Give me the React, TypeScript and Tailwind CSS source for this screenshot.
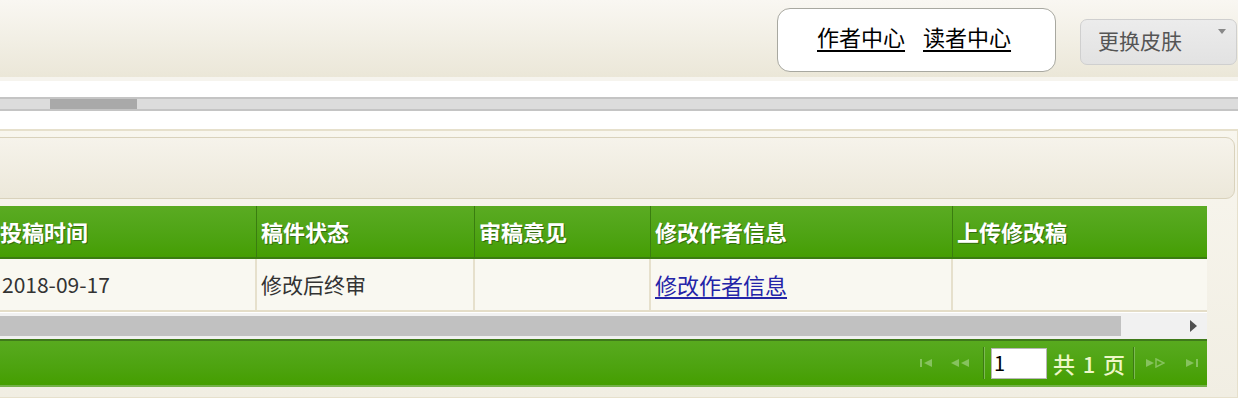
import React from "react";

const COLS = "grid-cols-[261px_218px_176px_302px_254px]";

const HEADERS = ["投稿时间", "稿件状态", "审稿意见", "修改作者信息", "上传修改稿"];

function PagerIcon({ kind }: { kind: "first" | "prev" | "next" | "last" }) {
  const fill = "#86c25e";
  if (kind === "first")
    return (
      <svg width="14" height="10" viewBox="0 0 14 10">
        <rect x="0" y="1" width="2" height="8" fill={fill} />
        <path d="M12 1 L4 5 L12 9 Z" fill={fill} />
      </svg>
    );
  if (kind === "prev")
    return (
      <svg width="20" height="10" viewBox="0 0 20 10">
        <path d="M9 1 L1 5 L9 9 Z" fill={fill} />
        <path d="M19 1 L11 5 L19 9 Z" fill={fill} />
      </svg>
    );
  if (kind === "next")
    return (
      <svg width="20" height="10" viewBox="0 0 20 10">
        <path d="M1 1 L9 5 L1 9 Z" fill={fill} />
        <path d="M11 1 L19 5 L11 9 Z" fill="none" stroke={fill} strokeWidth="1.5" />
      </svg>
    );
  return (
    <svg width="14" height="10" viewBox="0 0 14 10">
      <path d="M2 1 L10 5 L2 9 Z" fill={fill} />
      <rect x="12" y="1" width="2" height="8" fill={fill} />
    </svg>
  );
}

function Separator() {
  return (
    <div className="flex h-[32px]">
      <div className="w-px bg-[#3c7c12]" />
      <div className="w-px bg-[#7cba52]" />
    </div>
  );
}

export default function App() {
  return (
    <div className="w-[1238px] h-[408px] overflow-hidden bg-white font-['Noto_Sans_CJK_SC','Noto_Sans',sans-serif]">
      {/* top bar */}
      <div className="h-[77px] bg-gradient-to-b from-[#f9f7f2] to-[#ebe7d8] flex items-start justify-end pr-px">
        <div className="mt-[8px] w-[279px] h-[64px] pb-[8px] bg-white border border-[#a8a8a0] rounded-[13px] flex items-center pl-[39px] gap-[18px] text-[22px] leading-none text-black">
          <a href="#" className="underline underline-offset-[4px]">作者中心</a>
          <a href="#" className="underline underline-offset-[4px]">读者中心</a>
        </div>
        <div className="mt-[19px] ml-[24px] w-[157px] h-[46px] pb-[3px] rounded-[7px] border border-[#cfcfcf] bg-gradient-to-b from-[#ececec] to-[#e2e2e2] flex items-center pl-[17px] pr-[10px] text-[21px] text-[#555] leading-none">
          <span className="flex-1">更换皮肤</span>
          <span className="self-start mt-[9px] w-0 h-0 border-l-[4px] border-r-[4px] border-t-[5px] border-l-transparent border-r-transparent border-t-[#888]" />
        </div>
      </div>
      <div className="h-[4px] bg-[#f6f4ee]" />
      <div className="h-[16px] bg-white" />

      {/* page scrollbar */}
      <div className="h-[14px] bg-[#dcdcdc] border-y-2 border-[#c4c4c4] flex items-stretch">
        <div className="ml-[50px] w-[87px] bg-[#a9a9a9]" />
      </div>
      <div className="h-[18px] bg-white" />

      {/* content frame */}
      <div className="h-[269px] bg-gradient-to-b from-[#f8f6ee] to-[#f1eee3] border-t-2 border-r border-b border-[#e6e0cc] pt-[6px] pb-[9px]">
        <div className="-ml-[20px] mr-[2px] h-[62px] rounded-[9px] border border-[#d9d2bc] bg-gradient-to-b from-[#f6f3eb] to-[#ece8da]" />

        <div className="-ml-[4px] w-[1211px] mt-[7px]">
          {/* header */}
          <div className={`grid ${COLS} h-[53px] bg-gradient-to-b from-[#5aab22] to-[#459e02] border-b-2 border-[#3a7d10]`}>
            {HEADERS.map((h, i) => (
              <div
                key={h}
                className={`flex items-center pl-[4px] text-[22px] font-bold text-white [text-shadow:1px_1px_0_#356e10] ${
                  i < HEADERS.length - 1 ? "border-r border-[#3a7d10]" : ""
                }`}
              >
                {h}
              </div>
            ))}
          </div>

          {/* data row */}
          <div className={`grid ${COLS} h-[53px] bg-[#f9f8f1] border-b-2 border-[#e4ddc8]`}>
            <div className="flex items-center pl-[6px] text-[21px] text-[#333] border-r-2 border-[#e6e0cc]">2018-09-17</div>
            <div className="flex items-center pl-[4px] text-[21px] text-[#333] border-r-2 border-[#e6e0cc]">修改后终审</div>
            <div className="border-r-2 border-[#e6e0cc]" />
            <div className="flex items-center pl-[4px] text-[22px] border-r-2 border-[#e6e0cc]">
              <a href="#" className="text-[#2424a8] underline underline-offset-[3px]">修改作者信息</a>
            </div>
            <div />
          </div>

          {/* table scrollbar */}
          <div className="h-[27px] bg-[#f1f1f1] py-[3px] flex items-stretch border-t border-white">
            <div className="w-[1125px] bg-[#c1c1c1]" />
            <div className="flex-1 flex items-center justify-end pr-[10px]">
              <span className="w-0 h-0 border-y-[6px] border-l-[7px] border-y-transparent border-l-[#505050]" />
            </div>
          </div>

          {/* pager */}
          <div className="h-[48px] bg-gradient-to-b from-[#58aa1e] to-[#459e00] border-t-2 border-[#3f7a1a] border-b-2 border-b-[#74b048] flex items-center justify-end pr-[9px]">
            <div className="flex items-center gap-[16px] mr-[13px]">
              <PagerIcon kind="first" />
              <PagerIcon kind="prev" />
            </div>
            <Separator />
            <div className="ml-[6px] w-[56px] h-[31px] bg-white border border-[#b8b8b8] flex items-center pl-[2px] text-[20px] text-black">1</div>
            <div className="ml-[6px] w-[72px] flex items-center justify-between text-[22px] text-[#eef7c8] font-medium">
              <span>共</span>
              <span>1</span>
              <span>页</span>
            </div>
            <div className="ml-[8px]">
              <Separator />
            </div>
            <div className="flex items-center gap-[19px] ml-[10px]">
              <PagerIcon kind="next" />
              <PagerIcon kind="last" />
            </div>
          </div>
        </div>
      </div>
    </div>
  );
}
